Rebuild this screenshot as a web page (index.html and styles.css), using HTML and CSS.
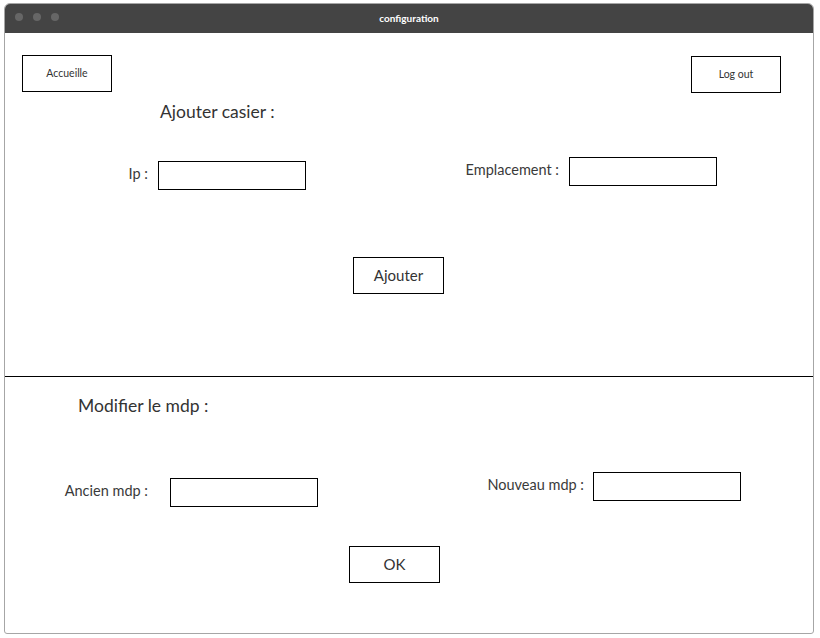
FILE: index.html
```html
<!DOCTYPE html>
<html lang="fr">
<head>
  <meta charset="UTF-8" />
  <meta name="viewport" content="width=device-width, initial-scale=1.0"/>
  <title>configuration</title>
  <link rel="stylesheet" href="styles.css">
</head>
<body>

  <div class="window">
    <!-- Title bar -->
    <div class="titlebar">
      <div class="dots">
        <span></span><span></span><span></span>
      </div>
      <div class="title">configuration</div>
    </div>

    <!-- Ajouter casier -->
    <div class="section section-top">
      <div class="topbar">
        <button class="small-btn">Accueille</button>
        <button class="small-btn logout">Log out</button>
      </div>

      <h2 class="heading heading-casier">Ajouter casier :</h2>

      <div class="fields fields-casier">
        <div class="field field-ip">
          <label for="ip">Ip :</label>
          <input type="text" id="ip" />
        </div>
        <div class="field field-place">
          <label for="place">Emplacement :</label>
          <input type="text" id="place" />
        </div>
      </div>

      <button class="big-btn btn-ajouter">Ajouter</button>
    </div>

    <div class="divider"></div>

    <!-- Modifier le mdp -->
    <div class="section section-bottom">
      <h2 class="heading heading-mdp">Modifier le mdp :</h2>

      <div class="fields fields-mdp">
        <div class="field field-old">
          <label for="oldPwd">Ancien mdp :</label>
          <input type="password" id="oldPwd" />
        </div>
        <div class="field field-new">
          <label for="newPwd">Nouveau mdp :</label>
          <input type="password" id="newPwd" />
        </div>
      </div>

      <button class="big-btn btn-ok">OK</button>
    </div>
  </div>

</body>
</html>
```

FILE: styles.css
```css
* {
  margin: 0;
  padding: 0;
  box-sizing: border-box;
}

body {
  background: #fff;
  font-family: Lato, "Open Sans", sans-serif;
  color: #333;
}

.window {
  margin: 3px 0 0 4px;
  width: 810px;
  height: 631px;
  border: 1px solid #a6a6a6;
  border-radius: 6px 6px 3px 3px;
  overflow: hidden;
}

.titlebar {
  height: 29px;
  background: #444;
  position: relative;
  display: flex;
  align-items: center;
  justify-content: center;
  padding-bottom: 2px;
}

.dots {
  position: absolute;
  left: 10px;
  top: 9px;
  display: flex;
  gap: 10px;
}

.dots span {
  width: 8px;
  height: 8px;
  border-radius: 50%;
  background: #666;
}

.title {
  color: #fff;
  font-size: 10px;
  font-weight: bold;
}

.section-top {
  height: 343px;
}

.divider {
  height: 1px;
  background: #000;
}

.topbar {
  display: flex;
  justify-content: space-between;
  align-items: flex-start;
  padding: 22px 32px 0 17px;
}

button {
  background: #fff;
  border: 1px solid #000;
  font-family: Lato, "Open Sans", sans-serif;
  color: #333;
  cursor: pointer;
}

.small-btn {
  width: 90px;
  height: 37px;
  font-size: 10.5px;
  padding-bottom: 2px;
}

.logout {
  margin-top: 1px;
}

.heading {
  font-size: 17.5px;
  font-weight: normal;
  line-height: 20px;
  color: #333;
}

.heading-casier {
  margin: 9px 0 0 155px;
}

.heading-mdp {
  margin: 19px 0 0 73px;
}

.fields {
  display: flex;
  align-items: flex-start;
}

.field {
  display: flex;
  align-items: center;
  gap: 10px;
}

.field label {
  width: 110px;
  text-align: right;
  font-size: 14.5px;
  margin-top: -4px;
  color: #3a3a3a;
}

.field input {
  width: 148px;
  height: 29px;
  border: 1px solid #000;
  outline: none;
}

.fields-casier {
  margin-top: 35px;
}

.field-ip {
  margin: 4px 0 0 33px;
}

.field-place {
  margin-left: 143px;
}

.fields-mdp {
  margin-top: 56px;
}

.field-old {
  margin: 6px 0 0 33px;
  gap: 22px;
}

.field-new {
  margin-left: 156px;
  gap: 9px;
}

.big-btn {
  display: block;
  width: 91px;
  height: 37px;
  font-size: 15px;
  padding-bottom: 2px;
}

.btn-ajouter {
  margin: 67px 0 0 348px;
}

.btn-ok {
  margin: 39px 0 0 344px;
}
```
